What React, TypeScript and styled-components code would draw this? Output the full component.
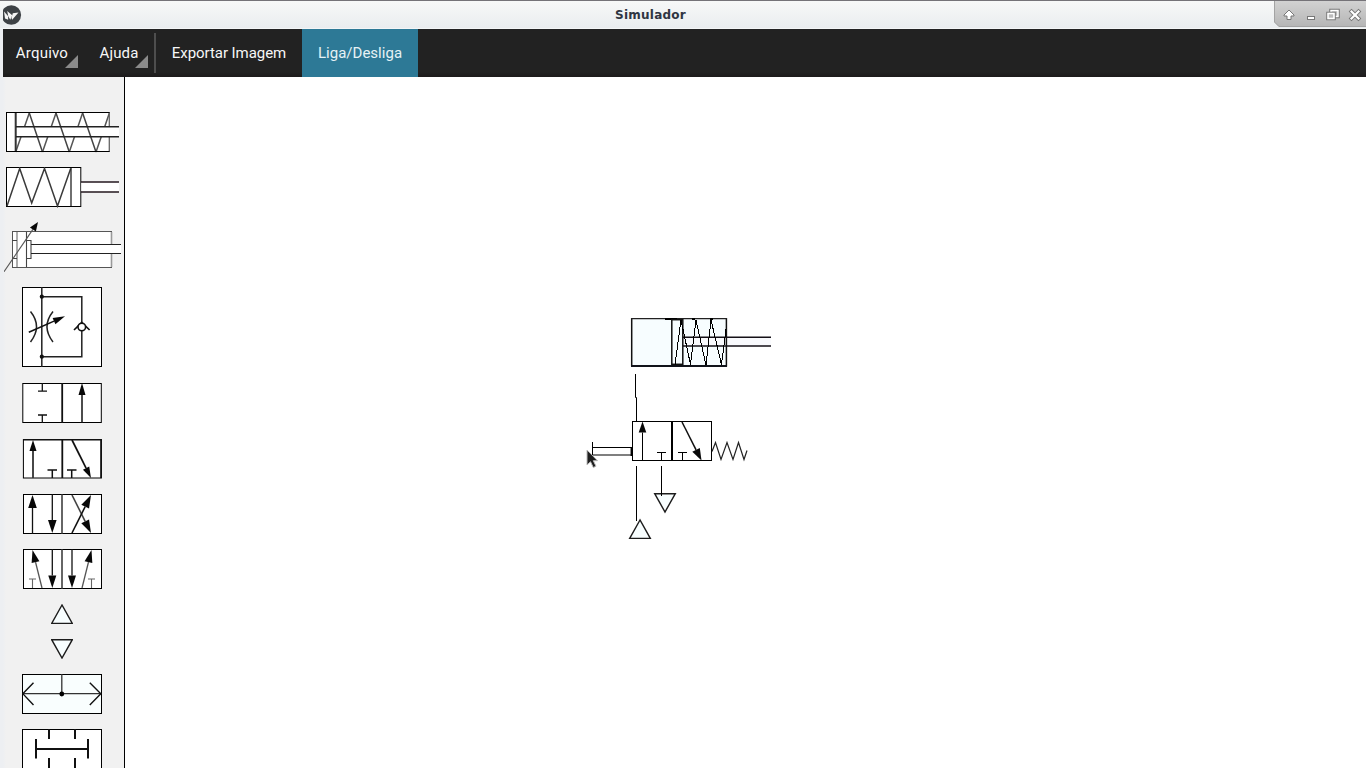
import React from "react";
import styled, { createGlobalStyle } from "styled-components";

const GlobalStyle = createGlobalStyle`
  html, body { margin: 0; background: #edeff2; overflow: hidden; }
  * { box-sizing: border-box; }
`;

const Window = styled.div`
  width: 1366px;
  height: 768px;
  display: flex;
  flex-direction: column;
  overflow: hidden;
  background: #edeff2;
`;

const TitleBar = styled.header`
  height: 29px;
  flex: none;
  display: flex;
  align-items: stretch;
  border-top: 1px solid #757378;
  border-bottom: 1px solid #f4f6f7;
  background: linear-gradient(#f7f8f8, #eaedef);
`;

const AppIcon = styled.svg`
  width: 19px;
  height: 20px;
  margin: 4px 0 0 3px;
  flex: none;
`;

const Title = styled.h1`
  flex: 1;
  margin: 0;
  padding: 1px 0 0 5px;
  text-align: center;
  font: bold 12px/27px "DejaVu Sans", sans-serif;
  letter-spacing: 0.25px;
  color: #2f3542;
`;

const WindowControls = styled.svg`
  width: 92px;
  height: 27px;
  flex: none;
`;

const Content = styled.div`
  flex: 1;
  min-height: 0;
  margin-left: 3px;
  display: flex;
  flex-direction: column;
`;

const Toolbar = styled.nav`
  height: 48px;
  flex: none;
  display: flex;
  background: linear-gradient(#222 0, #222 43px, #1c1a1b 48px);
`;

const ToolButton = styled.button<{ $width: number; $active?: boolean; $menu?: boolean; $spacing?: number }>`
  position: relative;
  width: ${(p) => p.$width}px;
  padding: 1px 0 0;
  border: 0;
  background: ${(p) => (p.$active ? "#2d7996" : "transparent")};
  color: ${(p) => (p.$active ? "#e6f2f5" : "#f7f7f7")};
  font: 15px/47px Roboto, sans-serif;
  letter-spacing: ${(p) => p.$spacing ?? 0.12}px;
  white-space: nowrap;
  ${(p) =>
    p.$menu &&
    `&::after {
      content: "";
      position: absolute;
      right: 0;
      bottom: 9px;
      border-style: solid;
      border-width: 0 0 13px 13px;
      border-color: transparent transparent #8b8b8b;
    }`}
`;

const Label = styled.span<{ $shift: number }>`
  padding-left: ${(p) => p.$shift}px;
`;

const Separator = styled.div`
  width: 2px;
  height: 40px;
  margin: 4px 0 0 6px;
  background: #4e4e4e;
`;

const Workspace = styled.div`
  flex: 1;
  min-height: 0;
  display: flex;
`;

const Palette = styled.aside`
  width: 122px;
  flex: none;
  display: flex;
  flex-direction: column;
  padding-top: 34px;
  overflow: hidden;
  background: linear-gradient(90deg, #edeff2 0, #f1f1f1 3px);
  border-right: 1px solid #000;
`;

const PaletteItem = styled.svg<{ $top?: number; $left?: number }>`
  flex: none;
  display: block;
  margin: ${(p) => p.$top ?? 0}px 0 0 ${(p) => p.$left ?? 19}px;
`;

const Board = styled.main`
  flex: 1;
  background: #fff;
`;

const Drawing = styled.svg`
  display: block;
`;

type ArrowProps = {
  from: [number, number];
  to: [number, number];
  head?: number;
  half?: number;
  width?: number;
  stroke?: string;
};

function Arrow({ from, to, head = 11, half = 3.5, width = 1.3, stroke = "#111" }: ArrowProps) {
  const dx = to[0] - from[0];
  const dy = to[1] - from[1];
  const len = Math.hypot(dx, dy);
  const ux = dx / len;
  const uy = dy / len;
  const bx = to[0] - ux * head;
  const by = to[1] - uy * head;
  const points = [
    [to[0], to[1]],
    [bx - uy * half, by + ux * half],
    [bx + uy * half, by - ux * half],
  ];
  return (
    <>
      <line x1={from[0]} y1={from[1]} x2={bx} y2={by} stroke={stroke} strokeWidth={width} />
      <polygon points={points.join(" ")} fill="#080808" stroke="none" />
    </>
  );
}

type SymbolProps = {
  w: number;
  h: number;
  top?: number;
  left?: number;
  children: React.ReactNode;
};

function PneumaticSymbol({ w, h, top, left, children }: SymbolProps) {
  return (
    <PaletteItem $top={top} $left={left} width={w} height={h} fill="none" stroke="#111" strokeWidth="1.3">
      {children}
    </PaletteItem>
  );
}

const Box = ({ w, h, x = 0.5, fill = "#fff" }: { w: number; h: number; x?: number; fill?: string }) => (
  <rect x={x} y="0.5" width={w} height={h} fill={fill} stroke="#000" strokeWidth="1" />
);

const SupplyTriangle = () => <polygon points="11,1 0.7,19.4 21.3,19.4" fill="#f8feff" stroke="#1c1c1c" strokeWidth="1.4" />;
const ExhaustTriangle = () => <polygon points="0.7,0.7 21.3,0.7 11,19" fill="#f8feff" stroke="#1c1c1c" strokeWidth="1.4" />;

function SymbolPalette() {
  return (
    <Palette>
      <PneumaticSymbol w={114} h={41} left={3} top={1}>
        <rect x="0" y="0" width="104" height="40" fill="#fff" stroke="none" />
        <path d="M9.7 40L23.3 1M36.5 40L50 1M63.3 40L76.6 1M90 40L103.4 1" stroke="#555" strokeWidth="1.5" />
        <rect x="9" y="14.8" width="104" height="10" fill="#fff" stroke="none" />
        <path d="M23.3 1L36.5 40M50 1L63.3 40M76.6 1L90 40" stroke="#444" strokeWidth="1.5" />
        <path d="M9.7 0V40" stroke="#333" strokeWidth="2" />
        <path d="M103.3 0V15M103.3 25V40" stroke="#666" />
        <path d="M0.5 0.5H103.5M0.5 39.5H103.5M0.5 0V40" stroke="#000" strokeWidth="1" />
        <path d="M10 14.8H113M10 24.8H113" stroke="#222" strokeWidth="1.4" />
      </PneumaticSymbol>
      <PneumaticSymbol w={114} h={41} left={3} top={14}>
        <Box w={74.3} h={39} />
        <path d="M1 39L13.7 1.5L25.7 36L38.5 1.5L51.5 39L64.7 1.5" stroke="#3a3a3a" strokeWidth="1.5" />
        <path d="M65 1V39" stroke="#222" />
        <rect x="75.3" y="15" width="37.7" height="9.5" fill="#fff" stroke="none" />
        <path d="M75 15H113M75 25H113" stroke="#24191f" strokeWidth="1.5" />
      </PneumaticSymbol>
      <PneumaticSymbol w={117} h={51} left={1} top={14}>
        <rect x="8.5" y="9.5" width="99" height="36" fill="#fff" stroke="#555" strokeWidth="1" />
        <path d="M107.5 10V45M13 10V45" stroke="#999" strokeWidth="1.6" />
        <rect x="27" y="22.5" width="91" height="9" fill="#fff" stroke="none" />
        <path d="M8 18.5H13M8 36.5H13M22.5 10V45M22.5 18.5H27V36.5H22.5" stroke="#444" strokeWidth="1.1" />
        <path d="M27 22.5H118M27 31.5H118" stroke="#222" strokeWidth="1" />
        <Arrow from={[0, 49.7]} to={[34, 0]} head={9} half={3.6} width={1.1} stroke="#555" />
      </PneumaticSymbol>
      <PneumaticSymbol w={80} h={80} top={14}>
        <Box w={79} h={79} />
        <path d="M19.8 0V80M19.8 9.7H59.8V35M59.8 44V69.7H19.8" stroke="#222" strokeWidth="1.5" />
        <circle cx="19.8" cy="9.7" r="2.1" fill="#111" stroke="none" />
        <circle cx="19.8" cy="69.7" r="2.1" fill="#111" stroke="none" />
        <path d="M8.5 24.5Q20.5 39.5 8.5 55M31 24.5Q19 39.5 31 55" stroke="#222" strokeWidth="1.5" />
        <Arrow from={[6.8, 45.2]} to={[43, 29.3]} head={12} width={1.6} />
        <path d="M52 43L59.8 35.5L67.6 43" strokeWidth="1.7" />
        <circle cx="59.8" cy="40" r="3.8" fill="#fff" strokeWidth="1.6" />
      </PneumaticSymbol>
      <PneumaticSymbol w={80} h={41} top={16}>
        <Box w={78.5} h={39} x={0.8} />
        <path d="M40.2 0V40" strokeWidth="1.8" />
        <path d="M20.3 0V8M16 8.2H25M20.3 40V32M16 32H25" />
        <Arrow from={[60, 40]} to={[60, 0]} head={12} width={1.5} />
      </PneumaticSymbol>
      <PneumaticSymbol w={80} h={40} top={15}>
        <Box w={78} h={38.5} x={1.4} />
        <path d="M40.3 0V39" strokeWidth="1.8" />
        <path d="M79 0V39M1 0.7H79" strokeWidth="1.6" />
        <path d="M30.3 39V31M25.5 31H35M49.7 39V31M45 31H54.5" strokeWidth="1.5" />
        <Arrow from={[11, 39]} to={[11, 1]} width={1.8} stroke="#333" />
        <Arrow from={[50, 1]} to={[69, 39]} width={1.7} />
      </PneumaticSymbol>
      <PneumaticSymbol w={80} h={40} top={15}>
        <Box w={78} h={39} x={1.5} />
        <path d="M40 0V40" strokeWidth="1.5" stroke="#333" />
        <Arrow from={[10.5, 40]} to={[10.5, 1]} head={13} half={4.3} />
        <Arrow from={[30.3, 0]} to={[30.3, 39]} head={13} half={4.3} />
        <Arrow from={[50, 1]} to={[69, 39]} head={13} half={4.3} width={1.6} stroke="#444" />
        <Arrow from={[50, 39]} to={[69, 1]} head={13} half={4.3} width={1.6} />
      </PneumaticSymbol>
      <PneumaticSymbol w={80} h={40} top={15}>
        <Box w={78} h={39} x={1.5} />
        <path d="M40 0V40" strokeWidth="1.5" stroke="#333" />
        <path d="M10.5 39V30M7 30H14M69.5 39V30M66 30H73" stroke="#666" strokeWidth="1.1" />
        <Arrow from={[20, 39]} to={[10.5, 1]} head={12.5} half={4} stroke="#555" />
        <Arrow from={[30.3, 0]} to={[30.3, 39]} head={12.5} half={4} />
        <Arrow from={[50, 0]} to={[50, 39]} head={12.5} half={4} />
        <Arrow from={[60, 39]} to={[69.5, 1]} head={12.5} half={4} stroke="#555" />
      </PneumaticSymbol>
      <PneumaticSymbol w={22} h={21} left={48} top={15}>
        <SupplyTriangle />
      </PneumaticSymbol>
      <PneumaticSymbol w={22} h={20} left={48} top={14}>
        <ExhaustTriangle />
      </PneumaticSymbol>
      <PneumaticSymbol w={80} h={40} top={15}>
        <Box w={79} h={39} fill="#f9fefe" />
        <path d="M0.8 19.7H79.2M39.8 0V20" stroke="#333" />
        <path d="M11.5 8.7L0.8 19.7L11.5 31M67.8 8.7L78.8 19.7L67.8 31" strokeWidth="1.4" />
        <circle cx="39.8" cy="20" r="2.4" fill="#000" stroke="none" />
      </PneumaticSymbol>
      <PneumaticSymbol w={80} h={40} top={15}>
        <Box w={79} h={45} />
        <path d="M27 0V10M53 0V10M27 29V40M53 29V40M14 10V29.5M66 10V29.5M14 20H66" strokeWidth="2" />
      </PneumaticSymbol>
    </Palette>
  );
}

function Circuit() {
  return (
    <Drawing width="1241" height="691" fill="none" stroke="#000" strokeWidth="1">
      {/* single-acting cylinder */}
      <g transform="translate(506 241)">
        <rect x="0.5" y="0.5" width="95" height="48" fill="#f7fdff" stroke="none" />
        <rect x="52" y="19" width="88" height="9" fill="#f9fafd" stroke="none" />
        <path d="M0.7 0V48.5M95.4 0V48.5" stroke="#111" strokeWidth="1.5" />
        <path d="M0 0.6H96" stroke="#222" strokeWidth="1.2" />
        <path d="M0 48H96" stroke="#11131a" strokeWidth="2" />
        <path d="M34 1H46M61 1H64M79 1H82" strokeWidth="2" />
        <rect x="40.8" y="1.7" width="11" height="44.6" stroke="#111" strokeWidth="1.5" />
        <path d="M52 19.3H140M52 28H140" stroke="#151017" strokeWidth="1.5" />
        <path d="M44 47L50 2L59.5 46.5L65 2L75 47L80 2L90.5 46.5L95 11" shapeRendering="crispEdges" />
      </g>
      {/* hoses */}
      <path d="M510.5 297V320.5H511.5V344M511.5 389V444" />
      {/* 3/2 valve with button and spring return */}
      <g transform="translate(507 344)">
        <rect x="0.5" y="0.5" width="79" height="39" fill="#fff" />
        <path d="M40 0V40" strokeWidth="2" />
        <path d="M29.5 40V31.5M25 31.5H34M50.5 40V31.5M46 31.5H55" />
        <Arrow from={[10.5, 40]} to={[10.5, 0.5]} half={3.8} stroke="#000" width={1} />
        <Arrow from={[50, 1]} to={[69.5, 39.5]} half={4.2} width={1.5} head={12} />
        <path d="M-39.5 21V35M-40 26.5H-1" />
        <path d="M-39 34H-1" stroke="#555" strokeWidth="1.6" />
        <path d="M-0.7 26V35" strokeWidth="1.5" />
        <path d="M80 30.5L83.5 21.5L89 38.5L95 21.5L101 38.5L106.5 21.5L112 38.5L115 29.5" stroke="#222" strokeWidth="1.2" />
      </g>
      <g transform="translate(504 442)"><SupplyTriangle /></g>
      <g transform="translate(529 416)"><ExhaustTriangle /></g>
      <path d="M536.5 389V419" />
      {/* pointer */}
      <path d="M462 373V388L465.5 384.7L468.3 390.5L471 389.2L468.3 383.7H472.5Z" fill="#1e1e1e" stroke="#bbb" strokeWidth="1" />
    </Drawing>
  );
}

export default function App() {
  return (
    <Window>
      <GlobalStyle />
      <TitleBar>
        <AppIcon viewBox="0 0 19 20">
          <circle cx="8.3" cy="10" r="9.8" fill="#3d4145" />
          <path d="M1 6.5L5 11L5.2 14.7L2 13.5ZM4.2 6L9.2 10.2L7.3 14.7L5.3 11.5ZM9.8 8.2L15.5 7.5L9.2 14.7L8.5 13Z" fill="#f5f5f5" />
        </AppIcon>
        <Title>Simulador</Title>
        <WindowControls viewBox="0 0 92 27">
          <defs>
            <linearGradient id="controls" x1="0" y1="0" x2="0" y2="1">
              <stop offset="0" stopColor="#d2d2d2" />
              <stop offset="1" stopColor="#b5b5b5" />
            </linearGradient>
          </defs>
          <path d="M0 0H92V26H5L0 21Z" fill="url(#controls)" />
          <path d="M0.5 0V21L5 25.5H92" fill="none" stroke="#a3a3a3" />
          <g stroke="#777" strokeWidth="1" fill="#fff">
            <path d="M15 9L20 14V15H17V18.5H13V15H10V14Z" strokeLinejoin="round" />
            <rect x="33.5" y="15.5" width="7" height="3" />
            <rect x="57" y="9.5" width="7" height="6" fill="none" strokeWidth="3.5" />
            <rect x="57" y="9.5" width="7" height="6" fill="#bbb" stroke="#fff" strokeWidth="1.5" />
            <rect x="54" y="12.5" width="6" height="5" fill="#bbb" strokeWidth="3.5" />
            <rect x="54" y="12.5" width="6" height="5" fill="#bbb" stroke="#fff" strokeWidth="1.6" />
          </g>
          <path d="M77.5 10.5L84.5 17.5M84.5 10.5L77.5 17.5" stroke="#777" strokeWidth="4" strokeLinecap="square" />
          <path d="M77.5 10.5L84.5 17.5M84.5 10.5L77.5 17.5" stroke="#fff" strokeWidth="2.2" strokeLinecap="square" />
        </WindowControls>
      </TitleBar>
      <Content>
        <Toolbar>
          <ToolButton $width={75} $menu $spacing={0.2}><Label $shift={3}>Arquivo</Label></ToolButton>
          <ToolButton $width={70} $menu><Label $shift={12}>Ajuda</Label></ToolButton>
          <Separator />
          <ToolButton $width={146} $spacing={-0.06}>Exportar Imagem</ToolButton>
          <ToolButton $width={116} $active $spacing={0.02}>Liga/Desliga</ToolButton>
        </Toolbar>
        <Workspace>
          <SymbolPalette />
          <Board>
            <Circuit />
          </Board>
        </Workspace>
      </Content>
    </Window>
  );
}
